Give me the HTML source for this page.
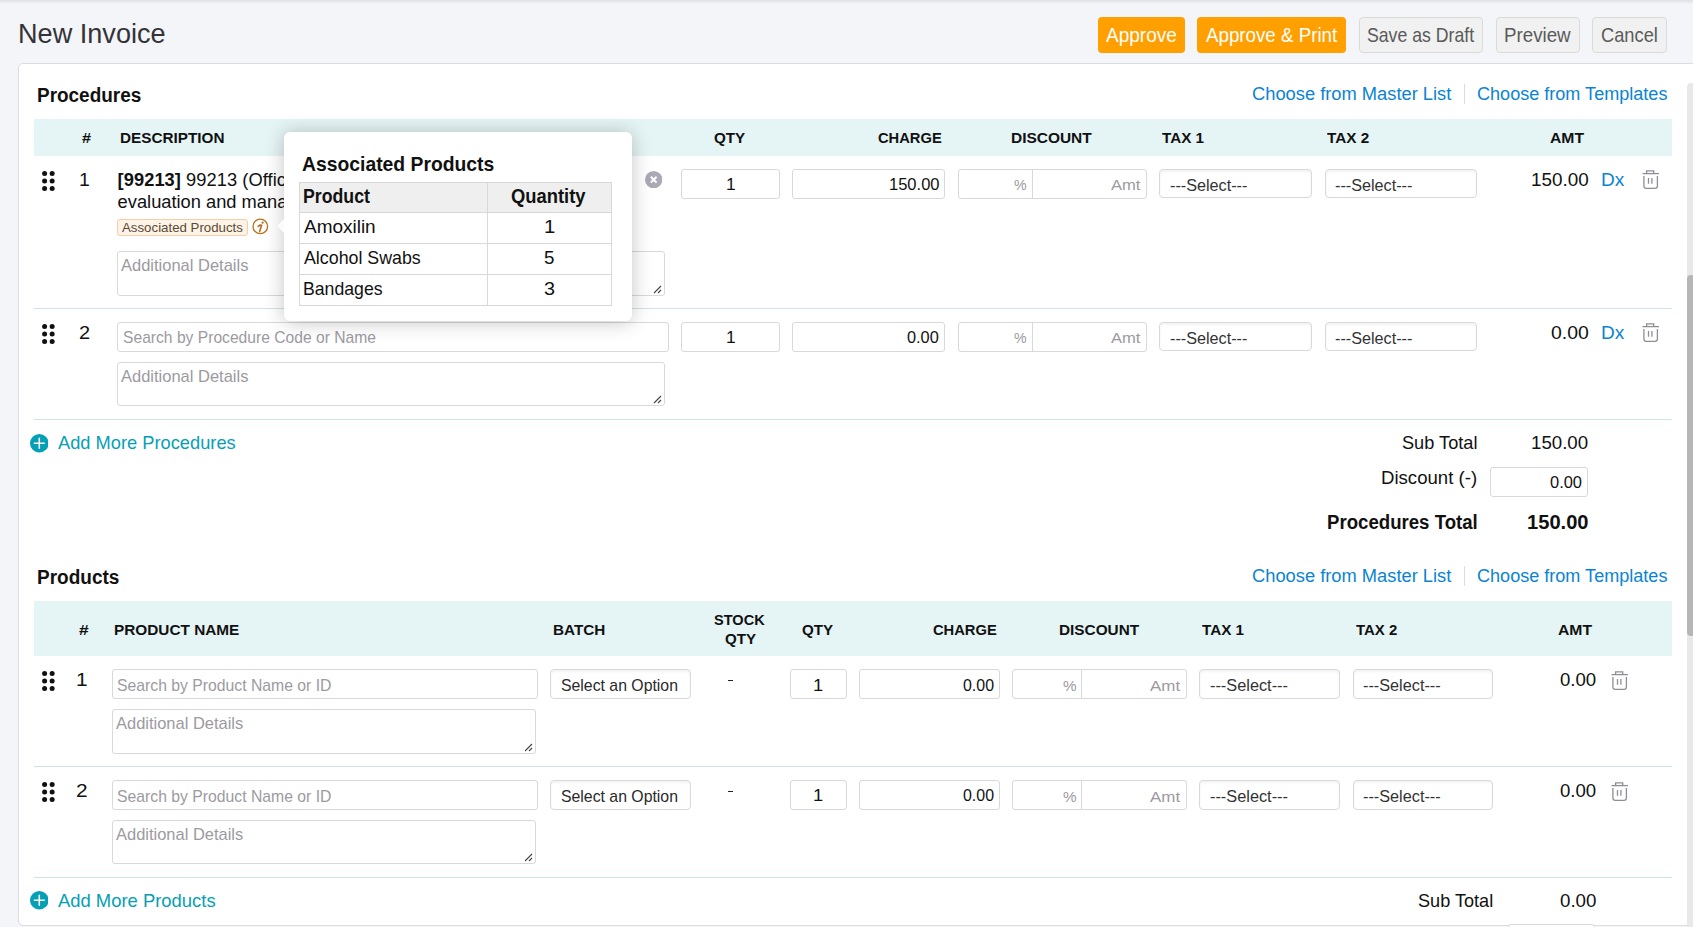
<!DOCTYPE html>
<html><head><meta charset="utf-8"><style>
html,body{margin:0;padding:0;}
body{width:1693px;height:927px;overflow:hidden;background:#f4f5f8;font-family:"Liberation Sans",sans-serif;position:relative;}
.a{position:absolute;}
.t{position:absolute;white-space:nowrap;line-height:1;}
</style></head><body>
<div class="a" style="left:0;top:0;width:1693px;height:4px;background:linear-gradient(#dedfe2,#f4f5f8);"></div>
<div class="t" style="left:17.78px;top:20px;font-size:28px;color:#333338;font-weight:400;transform:scaleX(0.9680);transform-origin:0 0;">New Invoice</div>
<div class="a" style="left:1098px;top:17px;width:87px;height:36px;background:#ff9f00;border-radius:4px;"></div>
<div class="t" style="left:1105.96px;top:25px;font-size:20.3px;color:#fff;font-weight:400;transform:scaleX(0.9375);transform-origin:0 0;">Approve</div>
<div class="a" style="left:1197px;top:17px;width:149px;height:36px;background:#ff9f00;border-radius:4px;"></div>
<div class="t" style="left:1206.36px;top:25px;font-size:20.3px;color:#fff;font-weight:400;transform:scaleX(0.9234);transform-origin:0 0;">Approve &amp; Print</div>
<div class="a" style="left:1359px;top:17px;width:124px;height:36px;box-sizing:border-box;background:#f0f1f0;border:1px solid #d8dbd8;border-radius:4px;"></div>
<div class="t" style="left:1366.99px;top:25px;font-size:20.3px;color:#5a5a5a;font-weight:400;transform:scaleX(0.8713);transform-origin:0 0;">Save as Draft</div>
<div class="a" style="left:1496px;top:17px;width:84px;height:36px;box-sizing:border-box;background:#f0f1f0;border:1px solid #d8dbd8;border-radius:4px;"></div>
<div class="t" style="left:1504.06px;top:25px;font-size:20.3px;color:#5a5a5a;font-weight:400;transform:scaleX(0.9240);transform-origin:0 0;">Preview</div>
<div class="a" style="left:1592px;top:17px;width:75px;height:36px;box-sizing:border-box;background:#f0f1f0;border:1px solid #d8dbd8;border-radius:4px;"></div>
<div class="t" style="left:1601.29px;top:25px;font-size:20.3px;color:#5a5a5a;font-weight:400;transform:scaleX(0.9010);transform-origin:0 0;">Cancel</div>
<div class="a" style="left:18px;top:63px;width:1702px;height:863px;box-sizing:border-box;background:#fff;border:1px solid #dcdde1;border-radius:5px;"></div>
<div class="a" style="left:1687px;top:83px;width:8px;height:857px;background:#e8e8e8;border-radius:4px 4px 0 0;"></div>
<div class="a" style="left:1687px;top:275px;width:8px;height:361px;background:#b6b6b6;border-radius:4px;"></div>
<div class="t" style="left:37.15px;top:85px;font-size:20.3px;color:#111;font-weight:700;transform:scaleX(0.9339);transform-origin:0 0;">Procedures</div>
<div class="t" style="left:1251.88px;top:85px;font-size:18.7px;color:#0a84d2;font-weight:400;transform:scaleX(0.9793);transform-origin:0 0;">Choose from Master List</div>
<div class="a" style="left:1464px;top:83.8px;width:1px;height:20.0px;background:#dcdde1;"></div>
<div class="t" style="left:1477.40px;top:85px;font-size:18.7px;color:#0a84d2;font-weight:400;transform:scaleX(0.9666);transform-origin:0 0;">Choose from Templates</div>
<div class="a" style="left:34px;top:119px;width:1638px;height:37px;background:#e5f4f5;"></div>
<div class="t" style="left:81.74px;top:130px;font-size:15.4px;color:#111;font-weight:700;transform:scaleX(1.0533);transform-origin:0 0;">#</div>
<div class="t" style="left:119.79px;top:130px;font-size:15.4px;color:#111;font-weight:700;transform:scaleX(0.9934);transform-origin:0 0;">DESCRIPTION</div>
<div class="t" style="left:714.29px;top:130px;font-size:15.4px;color:#111;font-weight:700;transform:scaleX(0.9880);transform-origin:0 0;">QTY</div>
<div class="t" style="left:878.01px;top:130px;font-size:15.4px;color:#111;font-weight:700;transform:scaleX(0.9556);transform-origin:0 0;">CHARGE</div>
<div class="t" style="left:1011.08px;top:130px;font-size:15.4px;color:#111;font-weight:700;transform:scaleX(1.0044);transform-origin:0 0;">DISCOUNT</div>
<div class="t" style="left:1162.12px;top:130px;font-size:15.4px;color:#111;font-weight:700;transform:scaleX(0.9907);transform-origin:0 0;">TAX 1</div>
<div class="t" style="left:1327.42px;top:130px;font-size:15.4px;color:#111;font-weight:700;transform:scaleX(0.9927);transform-origin:0 0;">TAX 2</div>
<div class="t" style="left:1550.39px;top:130px;font-size:15.4px;color:#111;font-weight:700;transform:scaleX(1.0213);transform-origin:0 0;">AMT</div>
<svg class="a" style="left:41.96px;top:171.38px" width="14" height="21" viewBox="0 0 14 21" fill="#111"><circle cx="2.60" cy="2.60" r="2.5"/><circle cx="10.15" cy="2.60" r="2.5"/><circle cx="2.60" cy="10.05" r="2.5"/><circle cx="10.15" cy="10.05" r="2.5"/><circle cx="2.60" cy="17.50" r="2.5"/><circle cx="10.15" cy="17.50" r="2.5"/></svg>
<div class="t" style="left:78.52px;top:171px;font-size:18.5px;color:#111;font-weight:400;transform:scaleX(1.0511);transform-origin:0 0;">1</div>
<div class="a" style="left:681px;top:169px;width:99px;height:30px;box-sizing:border-box;border:1px solid #d9d9d9;border-radius:3px;background:#fff;"></div>
<div class="t" style="left:725.88px;top:177px;font-size:16px;color:#111;font-weight:400;transform:scaleX(1.0851);transform-origin:0 0;">1</div>
<div class="a" style="left:792px;top:169px;width:153px;height:30px;box-sizing:border-box;border:1px solid #d9d9d9;border-radius:3px;background:#fff;"></div>
<div class="t" style="left:888.65px;top:177px;font-size:16px;color:#111;font-weight:400;transform:scaleX(1.0318);transform-origin:0 0;">150.00</div>
<div class="a" style="left:958px;top:169px;width:189px;height:30px;box-sizing:border-box;border:1px solid #d9d9d9;border-radius:3px;background:#fff;"></div>
<div class="a" style="left:1032px;top:169px;width:1px;height:30px;background:#d9d9d9;"></div>
<div class="t" style="left:1014.49px;top:177px;font-size:15.4px;color:#9c9aa1;font-weight:400;transform:scaleX(0.9208);transform-origin:0 0;">%</div>
<div class="t" style="left:1110.67px;top:177px;font-size:15.4px;color:#9c9aa1;font-weight:400;transform:scaleX(1.0761);transform-origin:0 0;">Amt</div>
<div class="a" style="left:1159px;top:169px;width:153px;height:29px;box-sizing:border-box;border:1px solid #d9d9d9;border-radius:4px;background:#fff;box-shadow:inset 0 2px 3px rgba(0,0,0,0.05);"></div>
<div class="t" style="left:1169.89px;top:178px;font-size:16px;color:#333;font-weight:400;transform:scaleX(1.0119);transform-origin:0 0;">---Select---</div>
<div class="a" style="left:1325px;top:169px;width:152px;height:29px;box-sizing:border-box;border:1px solid #d9d9d9;border-radius:4px;background:#fff;box-shadow:inset 0 2px 3px rgba(0,0,0,0.05);"></div>
<div class="t" style="left:1335.49px;top:178px;font-size:16px;color:#333;font-weight:400;transform:scaleX(1.0119);transform-origin:0 0;">---Select---</div>
<div class="t" style="left:1531.07px;top:170px;font-size:19px;color:#111;font-weight:400;transform:scaleX(0.9922);transform-origin:0 0;">150.00</div>
<div class="t" style="left:1600.94px;top:171px;font-size:18.5px;color:#0a84d2;font-weight:400;transform:scaleX(1.0303);transform-origin:0 0;">Dx</div>
<svg class="a" style="left:1641.5px;top:170px" width="18" height="20" viewBox="0 0 18 20"><g fill="none" stroke="#8f8d97" stroke-width="1.3"><path d="M0.5 3.6 H17"/><path d="M4.6 3.4 V0.8 H11.7 V3.4"/><path d="M1.9 6 V16 Q1.9 18.4 4.3 18.4 H13 Q15.4 18.4 15.4 16 V6"/><path d="M6.5 7.9 V13.8 M9.9 7.9 V13.8"/></g></svg>
<div class="t" style="left:117.6px;top:171px;font-size:18.3px;color:#111;font-weight:400;letter-spacing:0.05px"><b>[99213]</b> 99213 (Office/outpatient visit for the</div>
<div class="t" style="left:117.6px;top:193px;font-size:18.3px;color:#111;font-weight:400;">evaluation and management of an established</div>
<div class="a" style="left:117px;top:219px;width:131px;height:17px;box-sizing:border-box;background:#fef4e5;border:1px solid #f5cfab;border-radius:3px;"></div>
<div class="t" style="left:122.47px;top:221px;font-size:13.6px;color:#5a4838;font-weight:400;transform:scaleX(0.9760);transform-origin:0 0;">Associated Products</div>
<svg class="a" style="left:251.5px;top:218px" width="17" height="17" viewBox="0 0 17 17"><circle cx="8.3" cy="8.4" r="7.3" fill="none" stroke="#b8701d" stroke-width="1.3"/><path d="M10.6 4.6 L10.6 4.7" stroke="#b8701d" stroke-width="2.2" stroke-linecap="round"/><path d="M6.2 8.3 Q8 6.8 9.6 7.3 L7.6 13.6" fill="none" stroke="#b8701d" stroke-width="1.6" stroke-linecap="round"/></svg>
<svg class="a" style="left:644.6px;top:170.7px" width="17.4" height="17.4" viewBox="0 0 18 18"><circle cx="9" cy="9" r="9" fill="#aca9b5"/><path d="M6 6 L12 12 M12 6 L6 12" stroke="#fff" stroke-width="2.1"/></svg>
<div class="a" style="left:117px;top:251px;width:548px;height:45px;box-sizing:border-box;border:1px solid #d9d9d9;border-radius:3px;background:#fff;"></div>
<div class="t" style="left:121.07px;top:257px;font-size:16.2px;color:#9c9aa1;font-weight:400;transform:scaleX(1.0189);transform-origin:0 0;">Additional Details</div>
<svg class="a" style="left:652px;top:284px" width="10" height="10" viewBox="0 0 10 10"><path d="M9 2 L2 9 M9 6 L6 9" stroke="#444" stroke-width="1.1"/></svg>
<div class="a" style="left:34px;top:308px;width:1638px;height:1px;background:#cfe2e5;"></div>
<svg class="a" style="left:41.96px;top:324.38px" width="14" height="21" viewBox="0 0 14 21" fill="#111"><circle cx="2.60" cy="2.60" r="2.5"/><circle cx="10.15" cy="2.60" r="2.5"/><circle cx="2.60" cy="10.05" r="2.5"/><circle cx="10.15" cy="10.05" r="2.5"/><circle cx="2.60" cy="17.50" r="2.5"/><circle cx="10.15" cy="17.50" r="2.5"/></svg>
<div class="t" style="left:78.60px;top:324px;font-size:18.5px;color:#111;font-weight:400;transform:scaleX(1.0787);transform-origin:0 0;">2</div>
<div class="a" style="left:681px;top:322px;width:99px;height:30px;box-sizing:border-box;border:1px solid #d9d9d9;border-radius:3px;background:#fff;"></div>
<div class="t" style="left:725.88px;top:330px;font-size:16px;color:#111;font-weight:400;transform:scaleX(1.0851);transform-origin:0 0;">1</div>
<div class="a" style="left:792px;top:322px;width:153px;height:30px;box-sizing:border-box;border:1px solid #d9d9d9;border-radius:3px;background:#fff;"></div>
<div class="t" style="left:907.18px;top:330px;font-size:16px;color:#111;font-weight:400;transform:scaleX(1.0194);transform-origin:0 0;">0.00</div>
<div class="a" style="left:958px;top:322px;width:189px;height:30px;box-sizing:border-box;border:1px solid #d9d9d9;border-radius:3px;background:#fff;"></div>
<div class="a" style="left:1032px;top:322px;width:1px;height:30px;background:#d9d9d9;"></div>
<div class="t" style="left:1014.49px;top:330px;font-size:15.4px;color:#9c9aa1;font-weight:400;transform:scaleX(0.9208);transform-origin:0 0;">%</div>
<div class="t" style="left:1110.67px;top:330px;font-size:15.4px;color:#9c9aa1;font-weight:400;transform:scaleX(1.0761);transform-origin:0 0;">Amt</div>
<div class="a" style="left:1159px;top:322px;width:153px;height:29px;box-sizing:border-box;border:1px solid #d9d9d9;border-radius:4px;background:#fff;box-shadow:inset 0 2px 3px rgba(0,0,0,0.05);"></div>
<div class="t" style="left:1169.89px;top:331px;font-size:16px;color:#333;font-weight:400;transform:scaleX(1.0119);transform-origin:0 0;">---Select---</div>
<div class="a" style="left:1325px;top:322px;width:152px;height:29px;box-sizing:border-box;border:1px solid #d9d9d9;border-radius:4px;background:#fff;box-shadow:inset 0 2px 3px rgba(0,0,0,0.05);"></div>
<div class="t" style="left:1335.49px;top:331px;font-size:16px;color:#333;font-weight:400;transform:scaleX(1.0119);transform-origin:0 0;">---Select---</div>
<div class="t" style="left:1550.96px;top:323px;font-size:19px;color:#111;font-weight:400;transform:scaleX(1.0217);transform-origin:0 0;">0.00</div>
<div class="t" style="left:1600.94px;top:324px;font-size:18.5px;color:#0a84d2;font-weight:400;transform:scaleX(1.0303);transform-origin:0 0;">Dx</div>
<svg class="a" style="left:1641.5px;top:323px" width="18" height="20" viewBox="0 0 18 20"><g fill="none" stroke="#8f8d97" stroke-width="1.3"><path d="M0.5 3.6 H17"/><path d="M4.6 3.4 V0.8 H11.7 V3.4"/><path d="M1.9 6 V16 Q1.9 18.4 4.3 18.4 H13 Q15.4 18.4 15.4 16 V6"/><path d="M6.5 7.9 V13.8 M9.9 7.9 V13.8"/></g></svg>
<div class="a" style="left:117px;top:322px;width:552px;height:30px;box-sizing:border-box;border:1px solid #d9d9d9;border-radius:3px;background:#fff;"></div>
<div class="t" style="left:122.98px;top:329px;font-size:16.2px;color:#9c9aa1;font-weight:400;transform:scaleX(0.9660);transform-origin:0 0;">Search by Procedure Code or Name</div>
<div class="a" style="left:117px;top:362px;width:548px;height:44px;box-sizing:border-box;border:1px solid #d9d9d9;border-radius:3px;background:#fff;"></div>
<div class="t" style="left:121.07px;top:368px;font-size:16.2px;color:#9c9aa1;font-weight:400;transform:scaleX(1.0189);transform-origin:0 0;">Additional Details</div>
<svg class="a" style="left:652px;top:394px" width="10" height="10" viewBox="0 0 10 10"><path d="M9 2 L2 9 M9 6 L6 9" stroke="#444" stroke-width="1.1"/></svg>
<div class="a" style="left:34px;top:419px;width:1638px;height:1px;background:#cfe2e5;"></div>
<svg class="a" style="left:29.90px;top:434.10px" width="18.60" height="18.60" viewBox="0 0 18 18"><circle cx="9" cy="9" r="9" fill="#05a0b5"/><path d="M9 3.7 V14.3 M3.7 9 H14.3" stroke="#fff" stroke-width="1.5"/></svg>
<div class="t" style="left:57.96px;top:433px;font-size:19px;color:#05a0b5;font-weight:400;transform:scaleX(0.9614);transform-origin:0 0;">Add More Procedures</div>
<div class="t" style="left:1401.96px;top:433px;font-size:19px;color:#111;font-weight:400;transform:scaleX(0.9562);transform-origin:0 0;">Sub Total</div>
<div class="t" style="left:1530.88px;top:433px;font-size:19px;color:#111;font-weight:400;transform:scaleX(0.9833);transform-origin:0 0;">150.00</div>
<div class="t" style="left:1381.48px;top:468px;font-size:19px;color:#111;font-weight:400;transform:scaleX(0.9785);transform-origin:0 0;">Discount (-)</div>
<div class="a" style="left:1490px;top:467px;width:98px;height:30px;box-sizing:border-box;border:1px solid #d9d9d9;border-radius:3px;background:#fff;"></div>
<div class="t" style="left:1550.38px;top:475px;font-size:16px;color:#111;font-weight:400;transform:scaleX(1.0261);transform-origin:0 0;">0.00</div>
<div class="t" style="left:1326.77px;top:513px;font-size:19.5px;color:#111;font-weight:700;transform:scaleX(0.9550);transform-origin:0 0;">Procedures Total</div>
<div class="t" style="left:1526.55px;top:513px;font-size:19.5px;color:#111;font-weight:700;transform:scaleX(1.0322);transform-origin:0 0;">150.00</div>
<div class="t" style="left:37.14px;top:567px;font-size:20.3px;color:#111;font-weight:700;transform:scaleX(0.9368);transform-origin:0 0;">Products</div>
<div class="t" style="left:1251.88px;top:567px;font-size:18.7px;color:#0a84d2;font-weight:400;transform:scaleX(0.9793);transform-origin:0 0;">Choose from Master List</div>
<div class="a" style="left:1464px;top:565.8px;width:1px;height:20.0px;background:#dcdde1;"></div>
<div class="t" style="left:1477.40px;top:567px;font-size:18.7px;color:#0a84d2;font-weight:400;transform:scaleX(0.9666);transform-origin:0 0;">Choose from Templates</div>
<div class="a" style="left:34px;top:601px;width:1638px;height:55px;background:#e5f4f5;"></div>
<div class="t" style="left:78.62px;top:622px;font-size:15.4px;color:#111;font-weight:700;transform:scaleX(1.1277);transform-origin:0 0;">#</div>
<div class="t" style="left:113.79px;top:622px;font-size:15.4px;color:#111;font-weight:700;transform:scaleX(0.9971);transform-origin:0 0;">PRODUCT NAME</div>
<div class="t" style="left:552.59px;top:622px;font-size:15.4px;color:#111;font-weight:700;transform:scaleX(0.9922);transform-origin:0 0;">BATCH</div>
<div class="t" style="left:714.46px;top:612px;font-size:15.4px;color:#111;font-weight:700;transform:scaleX(0.9452);transform-origin:0 0;">STOCK</div>
<div class="t" style="left:724.70px;top:631px;font-size:15.4px;color:#111;font-weight:700;transform:scaleX(0.9815);transform-origin:0 0;">QTY</div>
<div class="t" style="left:802.20px;top:622px;font-size:15.4px;color:#111;font-weight:700;transform:scaleX(0.9815);transform-origin:0 0;">QTY</div>
<div class="t" style="left:933.01px;top:622px;font-size:15.4px;color:#111;font-weight:700;transform:scaleX(0.9556);transform-origin:0 0;">CHARGE</div>
<div class="t" style="left:1058.89px;top:622px;font-size:15.4px;color:#111;font-weight:700;transform:scaleX(0.9969);transform-origin:0 0;">DISCOUNT</div>
<div class="t" style="left:1202.42px;top:622px;font-size:15.4px;color:#111;font-weight:700;transform:scaleX(0.9907);transform-origin:0 0;">TAX 1</div>
<div class="t" style="left:1356.42px;top:622px;font-size:15.4px;color:#111;font-weight:700;transform:scaleX(0.9711);transform-origin:0 0;">TAX 2</div>
<div class="t" style="left:1558.49px;top:622px;font-size:15.4px;color:#111;font-weight:700;transform:scaleX(1.0213);transform-origin:0 0;">AMT</div>
<svg class="a" style="left:41.96px;top:671.40px" width="14" height="21" viewBox="0 0 14 21" fill="#111"><circle cx="2.60" cy="2.60" r="2.5"/><circle cx="10.15" cy="2.60" r="2.5"/><circle cx="2.60" cy="10.05" r="2.5"/><circle cx="10.15" cy="10.05" r="2.5"/><circle cx="2.60" cy="17.50" r="2.5"/><circle cx="10.15" cy="17.50" r="2.5"/></svg>
<div class="t" style="left:75.72px;top:671px;font-size:18.5px;color:#111;font-weight:400;transform:scaleX(1.1261);transform-origin:0 0;">1</div>
<div class="a" style="left:112px;top:669px;width:426px;height:30px;box-sizing:border-box;border:1px solid #d9d9d9;border-radius:3px;background:#fff;"></div>
<div class="t" style="left:117.18px;top:677px;font-size:16.2px;color:#9c9aa1;font-weight:400;transform:scaleX(0.9728);transform-origin:0 0;">Search by Product Name or ID</div>
<div class="a" style="left:550px;top:669px;width:141px;height:30px;box-sizing:border-box;border:1px solid #d9d9d9;border-radius:4px;background:#fff;box-shadow:inset 0 2px 3px rgba(0,0,0,0.05);"></div>
<div class="t" style="left:560.87px;top:677px;font-size:16.2px;color:#2a2a2a;font-weight:400;transform:scaleX(0.9771);transform-origin:0 0;">Select an Option</div>
<div class="a" style="left:728.3px;top:680px;width:4.7000000000000455px;height:1.2000000000000455px;background:#222;"></div>
<div class="a" style="left:790px;top:669px;width:57px;height:30px;box-sizing:border-box;border:1px solid #d9d9d9;border-radius:3px;background:#fff;"></div>
<div class="t" style="left:813.21px;top:678px;font-size:16px;color:#111;font-weight:400;transform:scaleX(1.1429);transform-origin:0 0;">1</div>
<div class="a" style="left:859px;top:669px;width:141px;height:30px;box-sizing:border-box;border:1px solid #d9d9d9;border-radius:3px;background:#fff;"></div>
<div class="t" style="left:962.69px;top:678px;font-size:16px;color:#111;font-weight:400;transform:scaleX(0.9960);transform-origin:0 0;">0.00</div>
<div class="a" style="left:1012px;top:669px;width:175px;height:30px;box-sizing:border-box;border:1px solid #d9d9d9;border-radius:3px;background:#fff;"></div>
<div class="a" style="left:1081px;top:669px;width:1px;height:30px;background:#d9d9d9;"></div>
<div class="t" style="left:1062.95px;top:678px;font-size:15.4px;color:#9c9aa1;font-weight:400;transform:scaleX(0.9923);transform-origin:0 0;">%</div>
<div class="t" style="left:1150.27px;top:678px;font-size:15.4px;color:#9c9aa1;font-weight:400;transform:scaleX(1.1018);transform-origin:0 0;">Amt</div>
<div class="a" style="left:1199px;top:669px;width:141px;height:30px;box-sizing:border-box;border:1px solid #d9d9d9;border-radius:4px;background:#fff;box-shadow:inset 0 2px 3px rgba(0,0,0,0.05);"></div>
<div class="t" style="left:1209.68px;top:678px;font-size:16px;color:#333;font-weight:400;transform:scaleX(1.0199);transform-origin:0 0;">---Select---</div>
<div class="a" style="left:1353px;top:669px;width:140px;height:30px;box-sizing:border-box;border:1px solid #d9d9d9;border-radius:4px;background:#fff;box-shadow:inset 0 2px 3px rgba(0,0,0,0.05);"></div>
<div class="t" style="left:1362.98px;top:678px;font-size:16px;color:#333;font-weight:400;transform:scaleX(1.0159);transform-origin:0 0;">---Select---</div>
<div class="t" style="left:1560.29px;top:670px;font-size:19px;color:#111;font-weight:400;transform:scaleX(0.9795);transform-origin:0 0;">0.00</div>
<svg class="a" style="left:1610.5px;top:671px" width="18" height="20" viewBox="0 0 18 20"><g fill="none" stroke="#8f8d97" stroke-width="1.3"><path d="M0.5 3.6 H17"/><path d="M4.6 3.4 V0.8 H11.7 V3.4"/><path d="M1.9 6 V16 Q1.9 18.4 4.3 18.4 H13 Q15.4 18.4 15.4 16 V6"/><path d="M6.5 7.9 V13.8 M9.9 7.9 V13.8"/></g></svg>
<div class="a" style="left:112px;top:709px;width:424px;height:45px;box-sizing:border-box;border:1px solid #d9d9d9;border-radius:3px;background:#fff;"></div>
<div class="t" style="left:115.97px;top:715px;font-size:16.2px;color:#9c9aa1;font-weight:400;transform:scaleX(1.0173);transform-origin:0 0;">Additional Details</div>
<svg class="a" style="left:523px;top:742px" width="10" height="10" viewBox="0 0 10 10"><path d="M9 2 L2 9 M9 6 L6 9" stroke="#444" stroke-width="1.1"/></svg>
<div class="a" style="left:34px;top:766px;width:1638px;height:1px;background:#cfe2e5;"></div>
<svg class="a" style="left:41.96px;top:782.40px" width="14" height="21" viewBox="0 0 14 21" fill="#111"><circle cx="2.60" cy="2.60" r="2.5"/><circle cx="10.15" cy="2.60" r="2.5"/><circle cx="2.60" cy="10.05" r="2.5"/><circle cx="10.15" cy="10.05" r="2.5"/><circle cx="2.60" cy="17.50" r="2.5"/><circle cx="10.15" cy="17.50" r="2.5"/></svg>
<div class="t" style="left:76.26px;top:782px;font-size:18.5px;color:#111;font-weight:400;transform:scaleX(1.1261);transform-origin:0 0;">2</div>
<div class="a" style="left:112px;top:780px;width:426px;height:30px;box-sizing:border-box;border:1px solid #d9d9d9;border-radius:3px;background:#fff;"></div>
<div class="t" style="left:117.18px;top:788px;font-size:16.2px;color:#9c9aa1;font-weight:400;transform:scaleX(0.9728);transform-origin:0 0;">Search by Product Name or ID</div>
<div class="a" style="left:550px;top:780px;width:141px;height:30px;box-sizing:border-box;border:1px solid #d9d9d9;border-radius:4px;background:#fff;box-shadow:inset 0 2px 3px rgba(0,0,0,0.05);"></div>
<div class="t" style="left:560.87px;top:788px;font-size:16.2px;color:#2a2a2a;font-weight:400;transform:scaleX(0.9771);transform-origin:0 0;">Select an Option</div>
<div class="a" style="left:728.3px;top:791px;width:4.7000000000000455px;height:1.2000000000000455px;background:#222;"></div>
<div class="a" style="left:790px;top:780px;width:57px;height:30px;box-sizing:border-box;border:1px solid #d9d9d9;border-radius:3px;background:#fff;"></div>
<div class="t" style="left:813.21px;top:788px;font-size:16px;color:#111;font-weight:400;transform:scaleX(1.1429);transform-origin:0 0;">1</div>
<div class="a" style="left:859px;top:780px;width:141px;height:30px;box-sizing:border-box;border:1px solid #d9d9d9;border-radius:3px;background:#fff;"></div>
<div class="t" style="left:962.69px;top:788px;font-size:16px;color:#111;font-weight:400;transform:scaleX(0.9960);transform-origin:0 0;">0.00</div>
<div class="a" style="left:1012px;top:780px;width:175px;height:30px;box-sizing:border-box;border:1px solid #d9d9d9;border-radius:3px;background:#fff;"></div>
<div class="a" style="left:1081px;top:780px;width:1px;height:30px;background:#d9d9d9;"></div>
<div class="t" style="left:1062.95px;top:789px;font-size:15.4px;color:#9c9aa1;font-weight:400;transform:scaleX(0.9923);transform-origin:0 0;">%</div>
<div class="t" style="left:1150.27px;top:789px;font-size:15.4px;color:#9c9aa1;font-weight:400;transform:scaleX(1.1018);transform-origin:0 0;">Amt</div>
<div class="a" style="left:1199px;top:780px;width:141px;height:30px;box-sizing:border-box;border:1px solid #d9d9d9;border-radius:4px;background:#fff;box-shadow:inset 0 2px 3px rgba(0,0,0,0.05);"></div>
<div class="t" style="left:1209.68px;top:789px;font-size:16px;color:#333;font-weight:400;transform:scaleX(1.0199);transform-origin:0 0;">---Select---</div>
<div class="a" style="left:1353px;top:780px;width:140px;height:30px;box-sizing:border-box;border:1px solid #d9d9d9;border-radius:4px;background:#fff;box-shadow:inset 0 2px 3px rgba(0,0,0,0.05);"></div>
<div class="t" style="left:1362.98px;top:789px;font-size:16px;color:#333;font-weight:400;transform:scaleX(1.0159);transform-origin:0 0;">---Select---</div>
<div class="t" style="left:1560.29px;top:781px;font-size:19px;color:#111;font-weight:400;transform:scaleX(0.9795);transform-origin:0 0;">0.00</div>
<svg class="a" style="left:1610.5px;top:782px" width="18" height="20" viewBox="0 0 18 20"><g fill="none" stroke="#8f8d97" stroke-width="1.3"><path d="M0.5 3.6 H17"/><path d="M4.6 3.4 V0.8 H11.7 V3.4"/><path d="M1.9 6 V16 Q1.9 18.4 4.3 18.4 H13 Q15.4 18.4 15.4 16 V6"/><path d="M6.5 7.9 V13.8 M9.9 7.9 V13.8"/></g></svg>
<div class="a" style="left:112px;top:820px;width:424px;height:44px;box-sizing:border-box;border:1px solid #d9d9d9;border-radius:3px;background:#fff;"></div>
<div class="t" style="left:115.97px;top:826px;font-size:16.2px;color:#9c9aa1;font-weight:400;transform:scaleX(1.0173);transform-origin:0 0;">Additional Details</div>
<svg class="a" style="left:523px;top:852px" width="10" height="10" viewBox="0 0 10 10"><path d="M9 2 L2 9 M9 6 L6 9" stroke="#444" stroke-width="1.1"/></svg>
<div class="a" style="left:34px;top:877px;width:1638px;height:1px;background:#cfe2e5;"></div>
<svg class="a" style="left:29.70px;top:891.40px" width="18.60" height="18.60" viewBox="0 0 18 18"><circle cx="9" cy="9" r="9" fill="#05a0b5"/><path d="M9 3.7 V14.3 M3.7 9 H14.3" stroke="#fff" stroke-width="1.5"/></svg>
<div class="t" style="left:58.46px;top:891px;font-size:19px;color:#05a0b5;font-weight:400;transform:scaleX(0.9690);transform-origin:0 0;">Add More Products</div>
<div class="t" style="left:1418.07px;top:891px;font-size:19px;color:#111;font-weight:400;transform:scaleX(0.9536);transform-origin:0 0;">Sub Total</div>
<div class="t" style="left:1559.79px;top:891px;font-size:19px;color:#111;font-weight:400;transform:scaleX(0.9851);transform-origin:0 0;">0.00</div>
<div class="a" style="left:1508px;top:924px;width:87px;height:36px;box-sizing:border-box;border:1px solid #d9d9d9;border-radius:3px;background:#fff;"></div>
<div class="a" style="left:284px;top:132px;width:348px;height:189px;background:#fff;border-radius:6px;box-shadow:0 1px 20px rgba(0,0,0,0.24);"></div>
<div class="a" style="left:276.8px;top:219px;width:0;height:0;border-top:7px solid transparent;border-bottom:7px solid transparent;border-right:7.2px solid #fcfcfc;"></div>
<div class="t" style="left:301.60px;top:153px;font-size:21px;color:#111;font-weight:700;transform:scaleX(0.9204);transform-origin:0 0;">Associated Products</div>
<div class="a" style="left:299px;top:182px;width:313px;height:124px;box-sizing:border-box;border:1px solid #d8d8d8;"></div>
<div class="a" style="left:300px;top:183px;width:311px;height:30px;background:#efefef;"></div>
<div class="a" style="left:299px;top:212px;width:313px;height:1px;background:#d8d8d8;"></div>
<div class="a" style="left:299px;top:243px;width:313px;height:1px;background:#d8d8d8;"></div>
<div class="a" style="left:299px;top:274px;width:313px;height:1px;background:#d8d8d8;"></div>
<div class="a" style="left:487px;top:182px;width:1px;height:124px;background:#d8d8d8;"></div>
<div class="t" style="left:303.33px;top:187px;font-size:19.8px;color:#111;font-weight:700;transform:scaleX(0.8954);transform-origin:0 0;">Product</div>
<div class="t" style="left:511.46px;top:187px;font-size:19.8px;color:#111;font-weight:700;transform:scaleX(0.9282);transform-origin:0 0;">Quantity</div>
<div class="t" style="left:304.06px;top:218px;font-size:18.5px;color:#111;font-weight:400;transform:scaleX(1.0252);transform-origin:0 0;">Amoxilin</div>
<div class="t" style="left:304.06px;top:249px;font-size:18.5px;color:#111;font-weight:400;transform:scaleX(0.9622);transform-origin:0 0;">Alcohol Swabs</div>
<div class="t" style="left:302.65px;top:280px;font-size:18.5px;color:#111;font-weight:400;transform:scaleX(0.9551);transform-origin:0 0;">Bandages</div>
<div class="t" style="left:543.65px;top:219px;font-size:17.8px;color:#111;font-weight:400;transform:scaleX(1.1444);transform-origin:0 0;">1</div>
<div class="t" style="left:543.85px;top:250px;font-size:17.8px;color:#111;font-weight:400;transform:scaleX(1.0549);transform-origin:0 0;">5</div>
<div class="t" style="left:543.85px;top:281px;font-size:17.8px;color:#111;font-weight:400;transform:scaleX(1.1141);transform-origin:0 0;">3</div>
</body></html>
